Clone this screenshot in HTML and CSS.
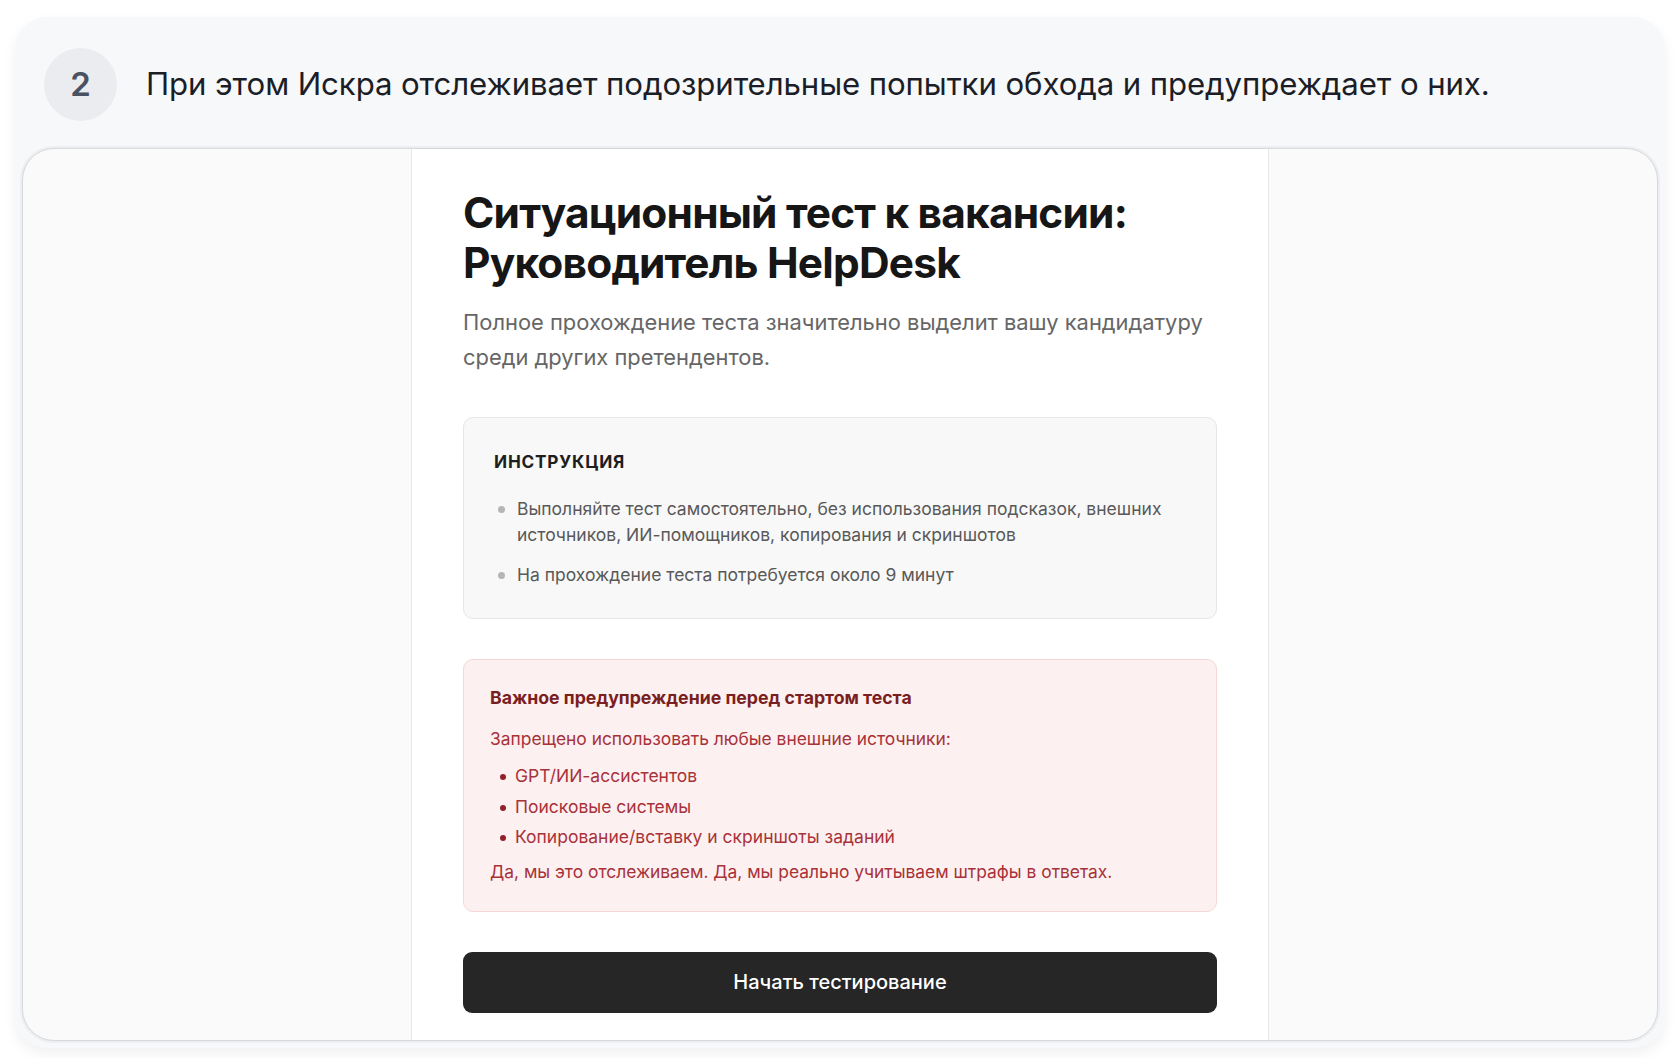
FILE: index.html
```html
<!DOCTYPE html>
<html lang="ru">
<head>
<meta charset="utf-8">
<title>Ситуационный тест</title>
<link rel="stylesheet" href="styles.css">
</head>
<body>
<div class="card">
  <div class="step-head">
    <div class="step-num">2</div>
    <div class="step-text">При этом Искра отслеживает подозрительные попытки обхода и предупреждает о них.</div>
  </div>
  <div class="frame">
    <div class="side"></div>
    <div class="panel">
      <h1 class="title">Ситуационный тест к вакансии:<br>Руководитель HelpDesk</h1>
      <p class="subtitle">Полное прохождение теста значительно выделит вашу кандидатуру среди других претендентов.</p>
      <div class="instr">
        <div class="instr-title">ИНСТРУКЦИЯ</div>
        <ul class="instr-list">
          <li>Выполняйте тест самостоятельно, без использования подсказок, внешних источников, ИИ-помощников, копирования и скриншотов</li>
          <li>На прохождение теста потребуется около 9 минут</li>
        </ul>
      </div>
      <div class="warn">
        <div class="warn-title">Важное предупреждение перед стартом теста</div>
        <div class="warn-text">Запрещено использовать любые внешние источники:</div>
        <ul class="warn-list">
          <li>GPT/ИИ-ассистентов</li>
          <li>Поисковые системы</li>
          <li>Копирование/вставку и скриншоты заданий</li>
        </ul>
        <div class="warn-text">Да, мы это отслеживаем. Да, мы реально учитываем штрафы в ответах.</div>
      </div>
      <button class="start">Начать тестирование</button>
    </div>
    <div class="side"></div>
  </div>
</div>
</body>
</html>
```
FILE: styles.css
```css
* { box-sizing: border-box; }
html, body { margin: 0; padding: 0; background: #ffffff; }
body {
  font-family: Inter, "Noto Sans", "DejaVu Sans", sans-serif;
  padding: 17px 15px 0 15px;
  height: 1058px;
  overflow: hidden;
}
.card {
  background: #f7f8fa;
  border-radius: 32px;
  padding: 0 7px 7px 7px;
  box-shadow: 0 6px 14px rgba(0,0,0,0.06);
}
.step-head {
  display: flex;
  align-items: center;
  height: 131px;
  padding-left: 22px;
  padding-top: 3px;
}
.step-num {
  width: 73px;
  height: 73px;
  border-radius: 50%;
  background: #ebecef;
  color: #4a5160;
  font-size: 33px;
  font-weight: 600;
  display: flex;
  align-items: center;
  justify-content: center;
  flex-shrink: 0;
}
.step-text {
  margin-left: 29px;
  font-size: 31.2px;
  color: #1b1e26;
  letter-spacing: -0.1px;
}
.frame {
  display: flex;
  height: 893px;
  background: #fafafa;
  border: 1.5px solid #d6d8dc;
  border-radius: 32px;
  overflow: hidden;
  box-shadow: 0 0 0 2px #eceef1;
}
.side { flex: 1; }
.panel {
  width: 858px;
  background: #ffffff;
  border-left: 1px solid #e8e8e8;
  border-right: 1px solid #e8e8e8;
  padding: 39px 51px 0 51px;
}
.title {
  margin: 0;
  font-size: 42.4px;
  line-height: 50px;
  font-weight: 700;
  color: #161616;
  letter-spacing: -0.8px;
}
.subtitle {
  margin: 17px 0 0 0;
  font-size: 21.9px;
  line-height: 35px;
  color: #666666;
}
.instr {
  margin-top: 42px;
  background: #f8f8f8;
  border: 1.5px solid #e6e6e6;
  border-radius: 10px;
  padding: 33px 30px 30px 30px;
}
.instr-title {
  font-size: 17.2px;
  font-weight: 700;
  letter-spacing: 0.8px;
  color: #1e1e1e;
  line-height: 22px;
}
.instr-list {
  list-style: none;
  margin: 23px 0 0 0;
  padding: 0;
}
.instr-list li {
  position: relative;
  padding-left: 23px;
  font-size: 17.5px;
  line-height: 25.7px;
  color: #595959;
}
.instr-list li + li { margin-top: 15px; }
.instr-list li::before {
  content: "";
  position: absolute;
  left: 4px;
  top: 10px;
  width: 7px;
  height: 7px;
  border-radius: 50%;
  background: #b5b5b5;
}
.warn {
  margin-top: 40px;
  background: #fdf0f0;
  border: 1.5px solid #f6d7d7;
  border-radius: 10px;
  padding: 26px 26px 27px 26px;
}
.warn-title {
  font-size: 17.7px;
  font-weight: 700;
  color: #7a1f1f;
  line-height: 24px;
}
.warn-text {
  margin-top: 17px;
  font-size: 17.4px;
  line-height: 24px;
  color: #a8323a;
}
.warn-list {
  list-style: none;
  margin: 10px 0 0 0;
  padding: 0;
}
.warn-list li {
  position: relative;
  padding-left: 25px;
  font-size: 17.5px;
  line-height: 30.5px;
  color: #a8323a;
}
.warn-list li::before {
  content: "";
  position: absolute;
  left: 10px;
  top: 13px;
  width: 6px;
  height: 6px;
  border-radius: 50%;
  background: #8f2229;
}
.warn-list + .warn-text { margin-top: 7px; }
.start {
  display: block;
  width: 100%;
  height: 61px;
  margin-top: 40px;
  border: none;
  border-radius: 9px;
  background: #262626;
  color: #ffffff;
  font-family: Inter, "Noto Sans", sans-serif;
  font-size: 20px;
  font-weight: 500;
}
```
